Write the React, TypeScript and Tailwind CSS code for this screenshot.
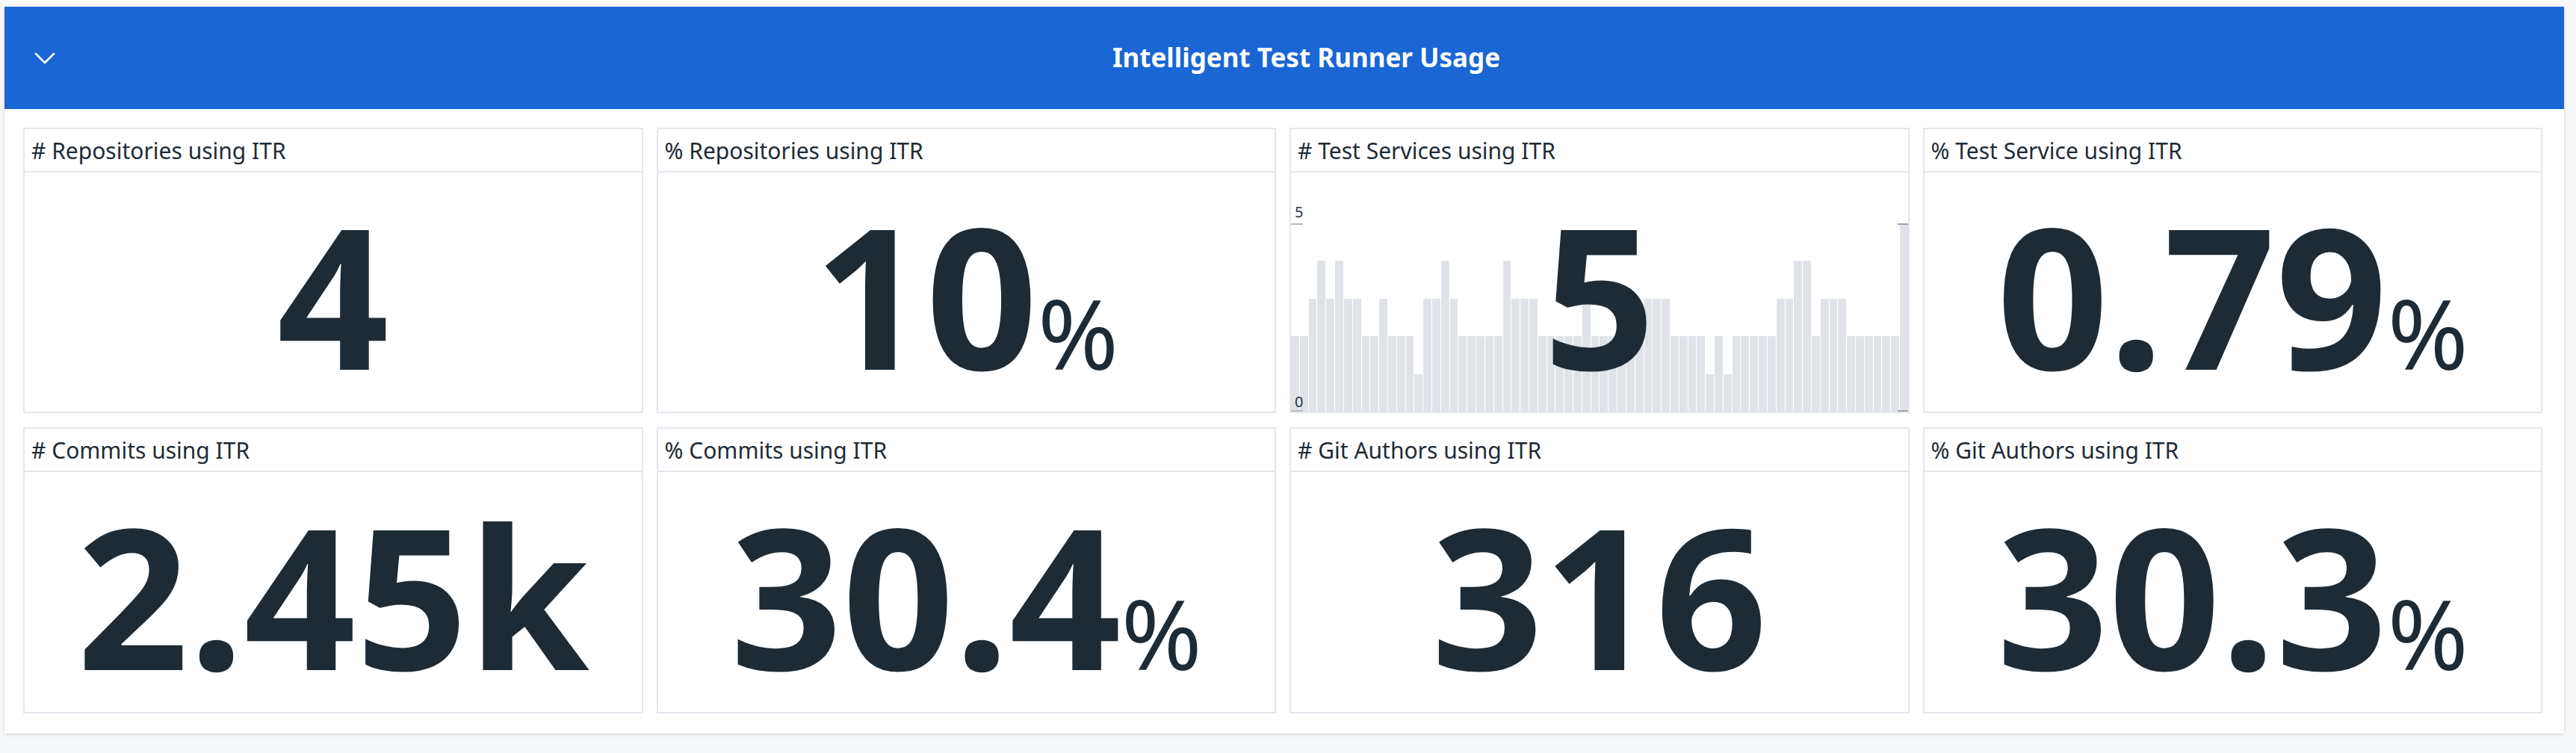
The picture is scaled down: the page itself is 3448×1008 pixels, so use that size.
import React from "react";

const bars = [
  2, 2, 3, 4, 3, 4, 3, 3, 2, 2, 3, 2, 2, 2, 1, 3, 3, 4, 3, 2, 2, 2, 2, 2, 4, 3, 3, 3, 2, 2,
  2, 2, 2, 3, 2, 2, 2, 2, 2, 2, 3, 3, 3, 2, 2, 2, 2, 1, 2, 1, 2, 2, 2, 2, 2, 3, 3, 4, 4, 2,
  3, 3, 3, 2, 2, 2, 2, 2, 2, 5,
];

function Card({ title, children }: { title: string; children: React.ReactNode }) {
  return (
    <div className="flex flex-col border-2 border-[#e3e6ed] bg-white">
      <div className="flex h-[58px] shrink-0 items-center border-b-2 border-[#e3e6ed] px-[9px] text-[30px] text-[#1e2b35]">
        {title}
      </div>
      <div className="relative flex flex-1 items-center justify-center">{children}</div>
    </div>
  );
}

function Value({ n, pct }: { n: string; pct?: boolean }) {
  return (
    <div className="relative z-10 flex items-baseline pt-[6px] text-[#1e2b35]">
      <span className="text-[262px] font-bold leading-none">{n}</span>
      {pct && <span className="text-[130px] font-normal leading-none">%</span>}
    </div>
  );
}

function Chart() {
  return (
    <div className="absolute inset-x-0 bottom-0 h-[252px]">
      <div className="flex h-full items-end gap-px">
        {bars.map((v, i) => (
          <div key={i} className="flex-1 bg-[#dfe3e8]" style={{ height: `${v * 20}%` }} />
        ))}
      </div>
      <span className="absolute -top-[25px] left-[5px] text-[20px] leading-none text-[#2a3540]">5</span>
      <span className="absolute bottom-[3px] left-[5px] text-[20px] leading-none text-[#2a3540]">0</span>
      <div className="absolute left-0 top-0 h-[2px] w-[16px] bg-[#b8bcc2]" />
      <div className="absolute bottom-0 left-0 h-[2px] w-[16px] bg-[#b8bcc2]" />
      <div className="absolute right-0 top-0 h-[2px] w-[14px] bg-[#9ea5ad]" />
      <div className="absolute bottom-0 right-0 h-[2px] w-[14px] bg-[#9ea5ad]" />
    </div>
  );
}

export default function App() {
  return (
    <div className="min-h-screen bg-[#f7f8fa] pl-[6px] pr-[16px] pt-[9px] font-['Noto_Sans',sans-serif]">
      <div className="bg-white shadow-[0_1px_4px_rgba(0,0,0,0.18)]">
        <div className="flex h-[137px] items-center bg-[#1a66d4] pl-[40px] pr-[9px]">
          <svg width="28" height="16" viewBox="0 0 28 16" fill="none">
            <path d="M2 2 L14 14 L26 2" stroke="white" strokeWidth="2.6" strokeLinecap="round" strokeLinejoin="round" />
          </svg>
          <div className="flex-1 text-center text-[35px] font-bold text-white">Intelligent Test Runner Usage</div>
        </div>
        <div className="grid grid-cols-4 grid-rows-[382px_383px] gap-x-[18px] gap-y-[19px] pb-[27px] pl-[25px] pr-[29px] pt-[25px]">
          <Card title="# Repositories using ITR">
            <Value n="4" />
          </Card>
          <Card title="% Repositories using ITR">
            <Value n="10" pct />
          </Card>
          <Card title="# Test Services using ITR">
            <Chart />
            <Value n="5" />
          </Card>
          <Card title="% Test Service using ITR">
            <Value n="0.79" pct />
          </Card>
          <Card title="# Commits using ITR">
            <Value n="2.45k" />
          </Card>
          <Card title="% Commits using ITR">
            <Value n="30.4" pct />
          </Card>
          <Card title="# Git Authors using ITR">
            <Value n="316" />
          </Card>
          <Card title="% Git Authors using ITR">
            <Value n="30.3" pct />
          </Card>
        </div>
      </div>
    </div>
  );
}
